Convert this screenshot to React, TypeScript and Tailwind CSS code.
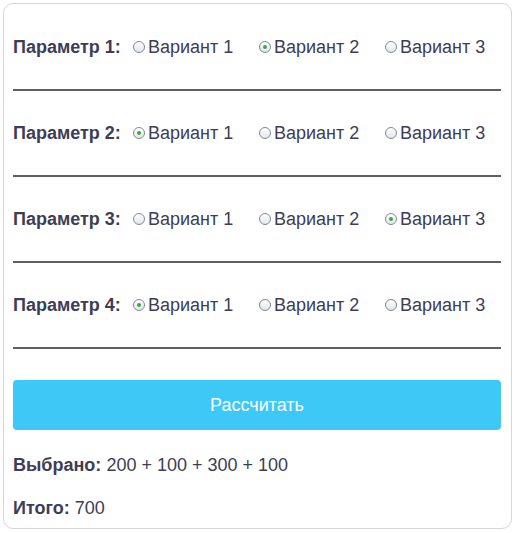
import { useState } from "react";

const params = [
  { name: "Параметр 1:", selected: 1 },
  { name: "Параметр 2:", selected: 0 },
  { name: "Параметр 3:", selected: 2 },
  { name: "Параметр 4:", selected: 0 },
];

const values = [100, 200, 300];

function Radio({ checked }: { checked: boolean }) {
  return (
    <span className="flex h-[12px] w-[12px] shrink-0 items-center justify-center rounded-full border border-[#7f8a99] bg-gradient-to-b from-white to-[#e3e6ea]">
      {checked && <span className="h-[4px] w-[4px] rounded-full bg-[#3ba93b]" />}
    </span>
  );
}

export default function App() {
  const [selected] = useState(params.map((p) => p.selected));
  const picked = selected.map((i) => values[i]);
  const total = picked.reduce((a, b) => a + b, 0);

  return (
    <div className="min-h-screen bg-white pl-[3px] pt-[3px] font-['Liberation_Sans',Arial,sans-serif] text-[18px] text-[#3e3d55]">
      <div className="w-[509px] rounded-[10px] border border-[#d6d6d6] pb-[10px] pl-[9px] pr-[10px] pt-px">
        {params.map((p, row) => (
          <div
            key={p.name}
            className="flex h-[86px] items-center border-b-2 border-[#5f5f66]"
          >
            <span className="w-[120px] shrink-0 font-bold">{p.name}</span>
            {["Вариант 1", "Вариант 2", "Вариант 3"].map((label, i) => (
              <label
                key={label}
                className={`flex items-center gap-[3px] ${i < 2 ? "w-[126px] shrink-0" : ""}`}
              >
                <Radio checked={selected[row] === i} />
                <span>{label}</span>
              </label>
            ))}
          </div>
        ))}

        <button className="mt-[31px] h-[50px] w-full rounded-[4px] bg-[#3ec8f6] text-white">
          Рассчитать
        </button>

        <p className="mt-[25px] leading-[20px]">
          <b>Выбрано:</b> {picked.join(" + ")}
        </p>
        <p className="mt-[23px] leading-[20px]">
          <b>Итого:</b> {total}
        </p>
      </div>
    </div>
  );
}
